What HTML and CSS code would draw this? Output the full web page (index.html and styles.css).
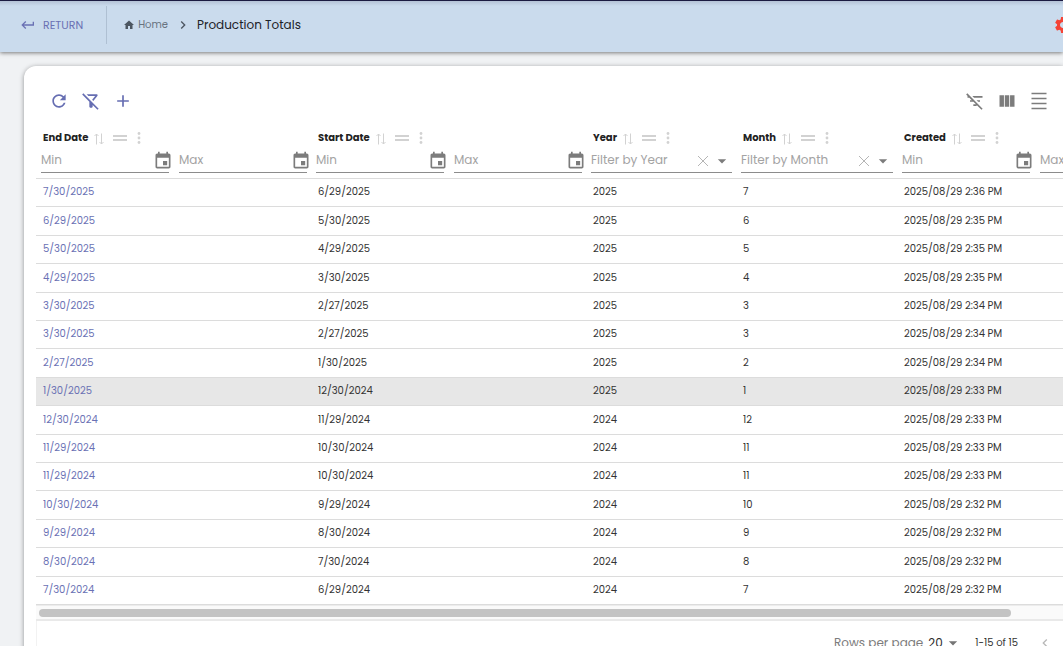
FILE: index.html
```html
<!DOCTYPE html>
<html lang="en">
<head>
<meta charset="utf-8">
<title>Production Totals</title>
<link rel="stylesheet" href="styles.css">
</head>
<body>
<svg class="sprite" aria-hidden="true">
  <symbol id="sort" viewBox="0 0 10 12"><path d="M2.5 11.500V1M.5 3 2.500 1l2 2M7.500 .5V11M5.500 9l2 2 2-2"/></symbol>
  <symbol id="drag" viewBox="0 0 14 6"><path d="M0 0h14v2H0zM0 4h14v2H0z"/></symbol>
  <symbol id="dots" viewBox="0 0 4 12"><circle cx="2" cy="1.500" r="1.400"/><circle cx="2" cy="6" r="1.400"/><circle cx="2" cy="10.500" r="1.400"/></symbol>
  <symbol id="event" viewBox="0 0 24 24"><path d="M17 12h-5v5h5v-5zM16 1v2H8V1H6v2H5c-1.110 0-1.990.9-1.990 2L3 19c0 1.100.89 2 2 2h14c1.100 0 2-.9 2-2V5c0-1.100-.9-2-2-2h-1V1h-2zm3 18H5V8h14v11z"/></symbol>
  <symbol id="clear" viewBox="0 0 12 12"><path d="M1 1l10 10M11 1L1 11"/></symbol>
  <symbol id="caret" viewBox="0 0 24 24"><path d="M7 10l5 5 5-5z"/></symbol>
</svg>

<header class="topbar">
  <a class="return" href="#"><svg class="i16" viewBox="0 0 24 24"><path d="M19 7v4H5.830l3.580-3.590L8 6l-6 6 6 6 1.410-1.410L5.830 13H21V7h-2z"/></svg>RETURN</a>
  <nav class="crumbs" aria-label="Breadcrumb">
    <a class="home" href="#"><svg class="i10" viewBox="2 2 20 20"><path d="M10 20v-6h4v6h5v-8h3L12 3 2 12h3v8z"/></svg>Home</a>
    <svg class="i16 sep" viewBox="0 0 24 24"><path d="M10 6L8.590 7.410 13.170 12l-4.580 4.590L10 18l6-6z"/></svg>
    <span class="current">Production Totals</span>
  </nav>
  <button class="gear" aria-label="Settings"><svg class="i20" viewBox="0 0 24 24"><path d="M19.140 12.940c.04-.3.060-.61.060-.94 0-.32-.02-.64-.07-.94l2.030-1.580c.18-.14.230-.41.120-.61l-1.920-3.320c-.12-.22-.37-.29-.59-.22l-2.390.96c-.5-.38-1.030-.7-1.620-.94l-.36-2.540c-.04-.24-.24-.41-.48-.41h-3.840c-.24 0-.43.170-.47.410l-.36 2.540c-.59.240-1.130.57-1.620.94l-2.390-.96c-.22-.08-.47 0-.59.220L2.740 8.870c-.12.210-.08.470.120.610l2.030 1.580c-.05.3-.09.630-.09.940s.02.640.070.940l-2.030 1.580c-.18.140-.23.410-.12.610l1.920 3.320c.12.220.37.290.59.220l2.390-.96c.5.380 1.030.7 1.620.94l.36 2.540c.05.240.24.410.48.410h3.840c.24 0 .44-.17.470-.41l.36-2.540c.59-.24 1.130-.56 1.620-.94l2.390.96c.22.080.47 0 .59-.22l1.920-3.320c.12-.22.070-.47-.12-.61l-2.010-1.580zM12 15.600c-1.980 0-3.600-1.620-3.600-3.600s1.620-3.600 3.600-3.600 3.600 1.620 3.600 3.600-1.620 3.600-3.600 3.600z"/></svg></button>
</header>

<main class="card">
  <div class="toolbar">
    <button aria-label="Refresh"><svg class="i20" viewBox="0 0 24 24"><path d="M17.650 6.350C16.200 4.900 14.210 4 12 4c-4.420 0-7.990 3.580-7.990 8s3.570 8 7.990 8c3.730 0 6.840-2.550 7.730-6h-2.080c-.82 2.330-3.040 4-5.650 4-3.310 0-6-2.690-6-6s2.690-6 6-6c1.660 0 3.140.69 4.220 1.780L13 11h7V4l-2.350 2.350z"/></svg></button>
    <button aria-label="Clear filters"><svg class="i20" viewBox="0 0 24 24"><path d="M16.950 6l-3.570 4.550 1.430 1.430c1.030-1.310 4.980-6.370 4.980-6.370C20.300 4.950 19.830 4 19 4H6.830l2 2h8.120zM2.810 2.810L1.390 4.220 10 13v6c0 .55.45 1 1 1h2c.55 0 1-.45 1-1v-2.170l5.780 5.780 1.410-1.410L2.810 2.810z"/></svg></button>
    <button aria-label="Add"><svg class="i20" viewBox="0 0 24 24"><path d="M19 13h-6v6h-2v-6H5v-2h6V5h2v6h6v2z"/></svg></button>
    <div class="view-tools">
      <button aria-label="Hide filters"><svg class="i20" viewBox="0 0 24 24"><path d="M10.830 8H21V6H8.830l2 2zm5 5H18v-2h-4.170l2 2zM14 16.830V18h-4v-2h3.170l-3-3H6v-2h2.170l-3-3H3V6h.17L1.390 4.220 2.800 2.810l18.380 18.380-1.410 1.410L14 16.830z"/></svg></button>
      <button aria-label="Columns"><svg class="i20" viewBox="0 0 24 24"><path d="M14.670 5v14H9.330V5h5.340zm1 14H21V5h-5.330v14zm-7.340 0V5H3v14h5.330z"/></svg></button>
      <button aria-label="Density"><svg class="i20" viewBox="0 0 24 24"><path d="M3 2h18v2H3zM3 20h18v2H3zM3 14h18v2H3zM3 8h18v2H3z"/></svg></button>
    </div>
  </div>

  <div class="grid">
    <div class="scroller">
      <table>
        <colgroup><col class="c-date"><col class="c-date"><col class="c-year"><col class="c-month"><col class="c-date"></colgroup>
        <thead>
          <tr>
            <th scope="col">
              <div class="title">End Date<svg class="sort"><use href="#sort"/></svg><svg class="drag"><use href="#drag"/></svg><svg class="dots"><use href="#dots"/></svg></div>
              <div class="filters">
                <div class="field"><input aria-label="End date from" placeholder="Min"><button class="cal" aria-label="Choose date"><svg class="i20"><use href="#event"/></svg></button></div>
                <div class="field"><input aria-label="End date to" placeholder="Max"><button class="cal" aria-label="Choose date"><svg class="i20"><use href="#event"/></svg></button></div>
              </div>
            </th>
            <th scope="col">
              <div class="title">Start Date<svg class="sort"><use href="#sort"/></svg><svg class="drag"><use href="#drag"/></svg><svg class="dots"><use href="#dots"/></svg></div>
              <div class="filters">
                <div class="field"><input aria-label="Start date from" placeholder="Min"><button class="cal" aria-label="Choose date"><svg class="i20"><use href="#event"/></svg></button></div>
                <div class="field"><input aria-label="Start date to" placeholder="Max"><button class="cal" aria-label="Choose date"><svg class="i20"><use href="#event"/></svg></button></div>
              </div>
            </th>
            <th scope="col">
              <div class="title">Year<svg class="sort"><use href="#sort"/></svg><svg class="drag"><use href="#drag"/></svg><svg class="dots"><use href="#dots"/></svg></div>
              <div class="filters">
                <div class="field"><input aria-label="Filter by Year" placeholder="Filter by Year"><button class="clear" aria-label="Clear"><svg><use href="#clear"/></svg></button><button class="open" aria-label="Open"><svg class="i20"><use href="#caret"/></svg></button></div>
              </div>
            </th>
            <th scope="col">
              <div class="title">Month<svg class="sort"><use href="#sort"/></svg><svg class="drag"><use href="#drag"/></svg><svg class="dots"><use href="#dots"/></svg></div>
              <div class="filters">
                <div class="field"><input aria-label="Filter by Month" placeholder="Filter by Month"><button class="clear" aria-label="Clear"><svg><use href="#clear"/></svg></button><button class="open" aria-label="Open"><svg class="i20"><use href="#caret"/></svg></button></div>
              </div>
            </th>
            <th scope="col">
              <div class="title">Created<svg class="sort"><use href="#sort"/></svg><svg class="drag"><use href="#drag"/></svg><svg class="dots"><use href="#dots"/></svg></div>
              <div class="filters">
                <div class="field"><input aria-label="Created from" placeholder="Min"><button class="cal" aria-label="Choose date"><svg class="i20"><use href="#event"/></svg></button></div>
                <div class="field"><input aria-label="Created to" placeholder="Max"><button class="cal" aria-label="Choose date"><svg class="i20"><use href="#event"/></svg></button></div>
              </div>
            </th>
          </tr>
        </thead>
        <tbody>
          <tr><td><a href="#">7/30/2025</a></td><td>6/29/2025</td><td>2025</td><td>7</td><td>2025/08/29 2:36 PM</td></tr>
          <tr><td><a href="#">6/29/2025</a></td><td>5/30/2025</td><td>2025</td><td>6</td><td>2025/08/29 2:35 PM</td></tr>
          <tr><td><a href="#">5/30/2025</a></td><td>4/29/2025</td><td>2025</td><td>5</td><td>2025/08/29 2:35 PM</td></tr>
          <tr><td><a href="#">4/29/2025</a></td><td>3/30/2025</td><td>2025</td><td>4</td><td>2025/08/29 2:35 PM</td></tr>
          <tr><td><a href="#">3/30/2025</a></td><td>2/27/2025</td><td>2025</td><td>3</td><td>2025/08/29 2:34 PM</td></tr>
          <tr><td><a href="#">3/30/2025</a></td><td>2/27/2025</td><td>2025</td><td>3</td><td>2025/08/29 2:34 PM</td></tr>
          <tr><td><a href="#">2/27/2025</a></td><td>1/30/2025</td><td>2025</td><td>2</td><td>2025/08/29 2:34 PM</td></tr>
          <tr class="active"><td><a href="#">1/30/2025</a></td><td>12/30/2024</td><td>2025</td><td>1</td><td>2025/08/29 2:33 PM</td></tr>
          <tr><td><a href="#">12/30/2024</a></td><td>11/29/2024</td><td>2024</td><td>12</td><td>2025/08/29 2:33 PM</td></tr>
          <tr><td><a href="#">11/29/2024</a></td><td>10/30/2024</td><td>2024</td><td>11</td><td>2025/08/29 2:33 PM</td></tr>
          <tr><td><a href="#">11/29/2024</a></td><td>10/30/2024</td><td>2024</td><td>11</td><td>2025/08/29 2:33 PM</td></tr>
          <tr><td><a href="#">10/30/2024</a></td><td>9/29/2024</td><td>2024</td><td>10</td><td>2025/08/29 2:32 PM</td></tr>
          <tr><td><a href="#">9/29/2024</a></td><td>8/30/2024</td><td>2024</td><td>9</td><td>2025/08/29 2:32 PM</td></tr>
          <tr><td><a href="#">8/30/2024</a></td><td>7/30/2024</td><td>2024</td><td>8</td><td>2025/08/29 2:32 PM</td></tr>
          <tr><td><a href="#">7/30/2024</a></td><td>6/29/2024</td><td>2024</td><td>7</td><td>2025/08/29 2:32 PM</td></tr>
        </tbody>
      </table>
    </div>
    <div class="track"><div class="thumb"></div></div>
    <div class="pager">
      <label for="rows">Rows per page</label>
      <span class="rows"><select id="rows"><option>20</option><option>50</option></select><svg class="i20"><use href="#caret"/></svg></span>
      <span class="range">1-15 of 15</span>
      <button class="prev" aria-label="Previous page"><svg class="i16" viewBox="0 0 24 24"><path d="M15.410 7.410L14 6l-6 6 6 6 1.410-1.410L10.830 12z"/></svg></button>
    </div>
  </div>
</main>
</body>
</html>
```

FILE: styles.css
```css
* { box-sizing: border-box; }
body {
  margin: 0;
  height: 100vh;
  overflow: hidden;
  background: #f0f2f4;
  color: #333;
  font: 10px/16px Poppins, "Open Sans", sans-serif;
}
button { display: flex; padding: 0; border: 0; background: none; color: inherit; cursor: pointer; }
a { color: #6a71b4; text-decoration: none; }
svg { flex: none; fill: currentColor; }
.sprite { display: none; }
.i10 { width: 10px; height: 10px; }
.i16 { width: 16px; height: 16px; }
.i20 { width: 20px; height: 20px; }

.topbar {
  display: flex;
  align-items: center;
  height: 52px;
  padding: 0 0 3px 20px;
  background: linear-gradient(#b4c2d6, #cadbed 5px);
  border-top: 1px solid #1b1b42;
  box-shadow: 0 1px 4px rgba(0, 0, 0, .5);
}
.return {
  display: flex;
  align-items: center;
  gap: 7px;
  height: 38px;
  padding-right: 23px;
  border-right: 1px solid #afc0d3;
  font-size: 11px;
}
.crumbs { display: flex; flex: 1; align-items: center; padding-left: 17px; }
.home { display: flex; align-items: center; gap: 4px; color: #68737f; }
.home svg, .sep { color: #4c5661; }
.sep { margin: 0 6px 0 7px; }
.current { color: #1d2228; font-size: 12px; }
.gear { margin-right: -10px; color: #f44336; }

.card {
  margin: 14px 0 0 24px;
  padding-left: 12px;
  background: #fff;
  border-radius: 12px 0 0 0;
  box-shadow: 0 1px 5px rgba(0, 0, 0, .4);
}
.toolbar {
  display: flex;
  align-items: center;
  gap: 12px;
  padding: 25px 14px 14px 13px;
  color: #666eb2;
}
.view-tools { display: flex; gap: 12px; margin-left: auto; color: #7c7c7c; }

.scroller { overflow: hidden; }
table { width: 1135px; table-layout: fixed; border-collapse: separate; border-spacing: 0; }
.c-date { width: 275px; }
.c-year { width: 150px; }
.c-month { width: 161px; }
th { padding: 0 4px 5px 5px; border-bottom: 1px solid #dcdcdc; text-align: left; font-weight: 700; }
td { height: 28px; padding: 0 7px 1px; border-bottom: 1px solid #dcdcdc; }
tr:nth-child(5n+2) td, tr:nth-child(5n+4) td { height: 29px; }
.active { background: #e7e7e7; }

.title { display: flex; align-items: center; height: 24px; padding: 1px 0 0 2px; color: #222; }
.title svg { color: #d2d2d2; }
.sort { width: 10px; height: 12px; margin: 2px 9px 0 6px; fill: none; stroke: currentColor; }
.drag { width: 14px; height: 6px; }
.dots { width: 4px; height: 12px; margin-left: 10px; }

.filters { display: flex; gap: 10px; }
.field { display: flex; flex: 1; align-items: center; min-width: 0; height: 24px; border-bottom: 1px solid #8c8c8c; color: #7c7c7c; }
input { flex: 1; min-width: 0; padding: 0 0 1px; border: 0; outline: 0; background: none; color: #333; font: 12px/16px Poppins, "Open Sans", sans-serif; }
input::placeholder { color: #a3a3a3; opacity: 1; }
.cal { margin: 1px -4px 0 0; }
.clear svg { width: 12px; height: 12px; fill: none; stroke: #b5b5b5; }
.open { margin-left: 3px; }

.track { height: 16px; padding: 3px 52px 0 3px; background: #fafafa; border-top: 1px solid #ececec; border-bottom: 2px solid #e9e9e9; }
.thumb { height: 8px; border-radius: 4px; background: #c3c3c3; }
.pager {
  display: flex;
  align-items: center;
  justify-content: flex-end;
  height: 44px;
  padding-right: 10px;
  border-left: 1px solid #f2f2f2;
  font-size: 12px;
}
.pager label { color: #7c7c7c; }
.rows { display: flex; align-items: center; margin: 0 12px 0 5px; color: #757575; }
select { width: 15px; padding: 0; border: 0; outline: 0; appearance: none; background: none; color: #2b2b2b; font: 12px/16px Poppins, "Open Sans", sans-serif; }
.range { font-size: 10px; }
.prev { margin-left: 19px; color: #b8b8b8; }
```
